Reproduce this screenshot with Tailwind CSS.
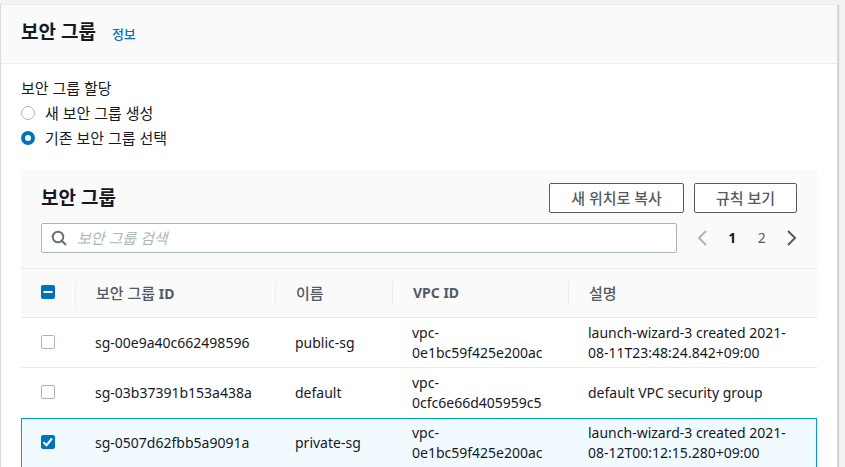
<!DOCTYPE html>
<html lang="ko">
<head>
    <meta charset="UTF-8">
    <meta name="viewport" content="width=device-width, initial-scale=1.0">
    <title>보안 그룹</title>
    <!-- Tailwind CSS -->
    <script src="https://cdn.jsdelivr.net/npm/@tailwindcss/browser@4"></script>
</head>
<body class="bg-[#f2f3f3] font-['Noto_Sans','Noto_Sans_CJK_KR',sans-serif] text-[#16191f] text-[14px] leading-5 pt-1 pr-[7px]">

    <section class="bg-white border border-[#eaeded] border-l-[#d5dbdb] border-r-[#d5dbdb] shadow-[1px_1px_1px_0_rgba(0,28,36,0.15)]">

        <!-- Cabecera de la tarjeta -->
        <header class="flex items-baseline gap-4 bg-[#fafafa] border-b border-[#eaeded] px-5 pt-[13px] pb-[17px]">
            <h1 class="text-[19px] leading-7 font-bold">보안 그룹</h1>
            <a href="#" class="text-[13px] font-medium text-[#0073bb] hover:underline">정보</a>
        </header>

        <div class="px-5 pt-[14px]">

            <!-- Asignación -->
            <fieldset>
                <legend class="text-[15px] leading-5">보안 그룹 할당</legend>
                <div class="flex flex-col gap-[5px] pt-[5px] text-[15px] leading-5">
                    <label class="flex items-center gap-[10px]">
                        <input type="radio" name="assign" class="appearance-none size-[14px] rounded-full border border-[#aab7b8] bg-white checked:border-4 checked:border-[#0073bb]">
                        새 보안 그룹 생성
                    </label>
                    <label class="flex items-center gap-[10px]">
                        <input type="radio" name="assign" checked class="appearance-none size-[14px] rounded-full border border-[#aab7b8] bg-white checked:border-4 checked:border-[#0073bb]">
                        기존 보안 그룹 선택
                    </label>
                </div>
            </fieldset>

            <!-- Panel de la tabla -->
            <div class="mt-[21px] bg-[#fafafa]">
                <div class="flex items-center gap-[10px] px-5 pt-[14px]">
                    <h2 class="flex-1 text-[19px] leading-7 font-bold">보안 그룹</h2>
                    <button class="h-[30px] px-[21px] bg-white border border-[#545b64] rounded-[2px] text-[15px] font-medium text-[#545b64]">새 위치로 복사</button>
                    <button class="h-[30px] px-[21px] bg-white border border-[#545b64] rounded-[2px] text-[15px] font-medium text-[#545b64]">규칙 보기</button>
                </div>

                <div class="flex items-center gap-5 px-5 pt-[10px] pb-[15px]">
                    <label class="flex flex-1 items-center gap-[10px] h-[30px] px-[9px] bg-white border border-[#aab7b8] rounded-[2px]">
                        <svg class="size-4 shrink-0" viewBox="0 0 16 16" fill="none" stroke="#687078" stroke-width="2">
                            <circle cx="7" cy="7" r="5.3"/>
                            <path d="M10.8 10.8 15 15"/>
                        </svg>
                        <input type="text" aria-label="보안 그룹 검색" placeholder="보안 그룹 검색" class="w-full bg-transparent outline-none text-[15px] placeholder:italic placeholder:text-[#aab7b8]">
                    </label>
                    <nav class="flex items-center justify-between w-[100px]">
                        <button aria-label="이전">
                            <svg class="w-[10px] h-4" viewBox="0 0 10 16" fill="none" stroke="#aab7b8" stroke-width="2"><path d="M9 1 2 8l7 7"/></svg>
                        </button>
                        <button class="font-bold">1</button>
                        <button class="text-[#545b64]">2</button>
                        <button aria-label="다음">
                            <svg class="w-[10px] h-4" viewBox="0 0 10 16" fill="none" stroke="#545b64" stroke-width="2"><path d="M1 1l7 7-7 7"/></svg>
                        </button>
                    </nav>
                </div>

                <table class="w-full table-fixed border-separate border-spacing-0 border-t border-[#eaeded] text-left">
                    <colgroup>
                        <col class="w-[54px]">
                        <col class="w-[200px]">
                        <col class="w-[117px]">
                        <col class="w-[176px]">
                        <col>
                    </colgroup>
                    <thead class="text-[#545b64]">
                        <tr>
                            <th class="h-[49px] pl-5 pb-[2px] border-b border-[#eaeded]">
                                <label class="relative block size-[14px]">
                                    <input type="checkbox" aria-label="모두 선택" class="block appearance-none size-[14px] rounded-[2px] bg-[#0073bb]">
                                    <svg class="absolute inset-0 size-[14px]" viewBox="0 0 14 14" stroke="#fff" stroke-width="2"><path d="M2.5 7h9"/></svg>
                                </label>
                            </th>
                            <th class="border-b border-[#eaeded]"><div class="border-l border-[#eaeded] pl-5 leading-6"><span class="text-[15px] font-medium">보안 그룹</span> ID</div></th>
                            <th class="border-b border-[#eaeded]"><div class="border-l border-[#eaeded] pl-5 leading-6 text-[15px] font-medium">이름</div></th>
                            <th class="border-b border-[#eaeded]"><div class="border-l border-[#eaeded] pl-5 leading-6">VPC ID</div></th>
                            <th class="border-b border-[#eaeded]"><div class="border-l border-[#eaeded] pl-5 leading-6 text-[15px] font-medium">설명</div></th>
                        </tr>
                    </thead>
                    <tbody class="bg-white">
                        <tr>
                            <td class="h-[50px] pl-5 pb-[2px] border-b border-[#eaeded]"><input type="checkbox" aria-label="public-sg" class="block appearance-none size-[14px] rounded-[2px] border border-[#aab7b8] bg-white"></td>
                            <td class="pl-5 whitespace-nowrap border-b border-[#eaeded]">sg-00e9a40c662498596</td>
                            <td class="px-5 whitespace-nowrap border-b border-[#eaeded]">public-sg</td>
                            <td class="px-5 border-b border-[#eaeded]">vpc-0e1bc59f425e200ac</td>
                            <td class="px-5 border-b border-[#eaeded]">launch-wizard-3 created 2021-08-11T23:48:24.842+09:00</td>
                        </tr>
                        <tr>
                            <td class="h-[50px] pl-5 pb-[2px]"><input type="checkbox" aria-label="default" class="block appearance-none size-[14px] rounded-[2px] border border-[#aab7b8] bg-white"></td>
                            <td class="pl-5 whitespace-nowrap">sg-03b37391b153a438a</td>
                            <td class="px-5 whitespace-nowrap">default</td>
                            <td class="px-5">vpc-0cfc6e66d405959c5</td>
                            <td class="px-5">default VPC security group</td>
                        </tr>
                        <tr class="bg-[#f1faff]">
                            <td class="h-[50px] pl-5 pb-[2px] border-y border-l border-[#00a1c9]">
                                <label class="relative block size-[14px] -ml-px">
                                    <input type="checkbox" checked aria-label="private-sg" class="peer block appearance-none size-[14px] rounded-[2px] border border-[#aab7b8] bg-white checked:border-[#0073bb] checked:bg-[#0073bb]">
                                    <svg class="absolute inset-0 size-[14px] hidden peer-checked:block" viewBox="0 0 14 14" fill="none" stroke="#fff" stroke-width="2"><path d="M2.5 7.2 5.6 10.2 11 3.5"/></svg>
                                </label>
                            </td>
                            <td class="pl-5 whitespace-nowrap border-y border-[#00a1c9]">sg-0507d62fbb5a9091a</td>
                            <td class="px-5 whitespace-nowrap border-y border-[#00a1c9]">private-sg</td>
                            <td class="px-5 border-y border-[#00a1c9]">vpc-0e1bc59f425e200ac</td>
                            <td class="px-5 border-y border-r border-[#00a1c9]">launch-wizard-3 created 2021-08-12T00:12:15.280+09:00</td>
                        </tr>
                    </tbody>
                </table>
            </div>
        </div>
    </section>

</body>
</html>
